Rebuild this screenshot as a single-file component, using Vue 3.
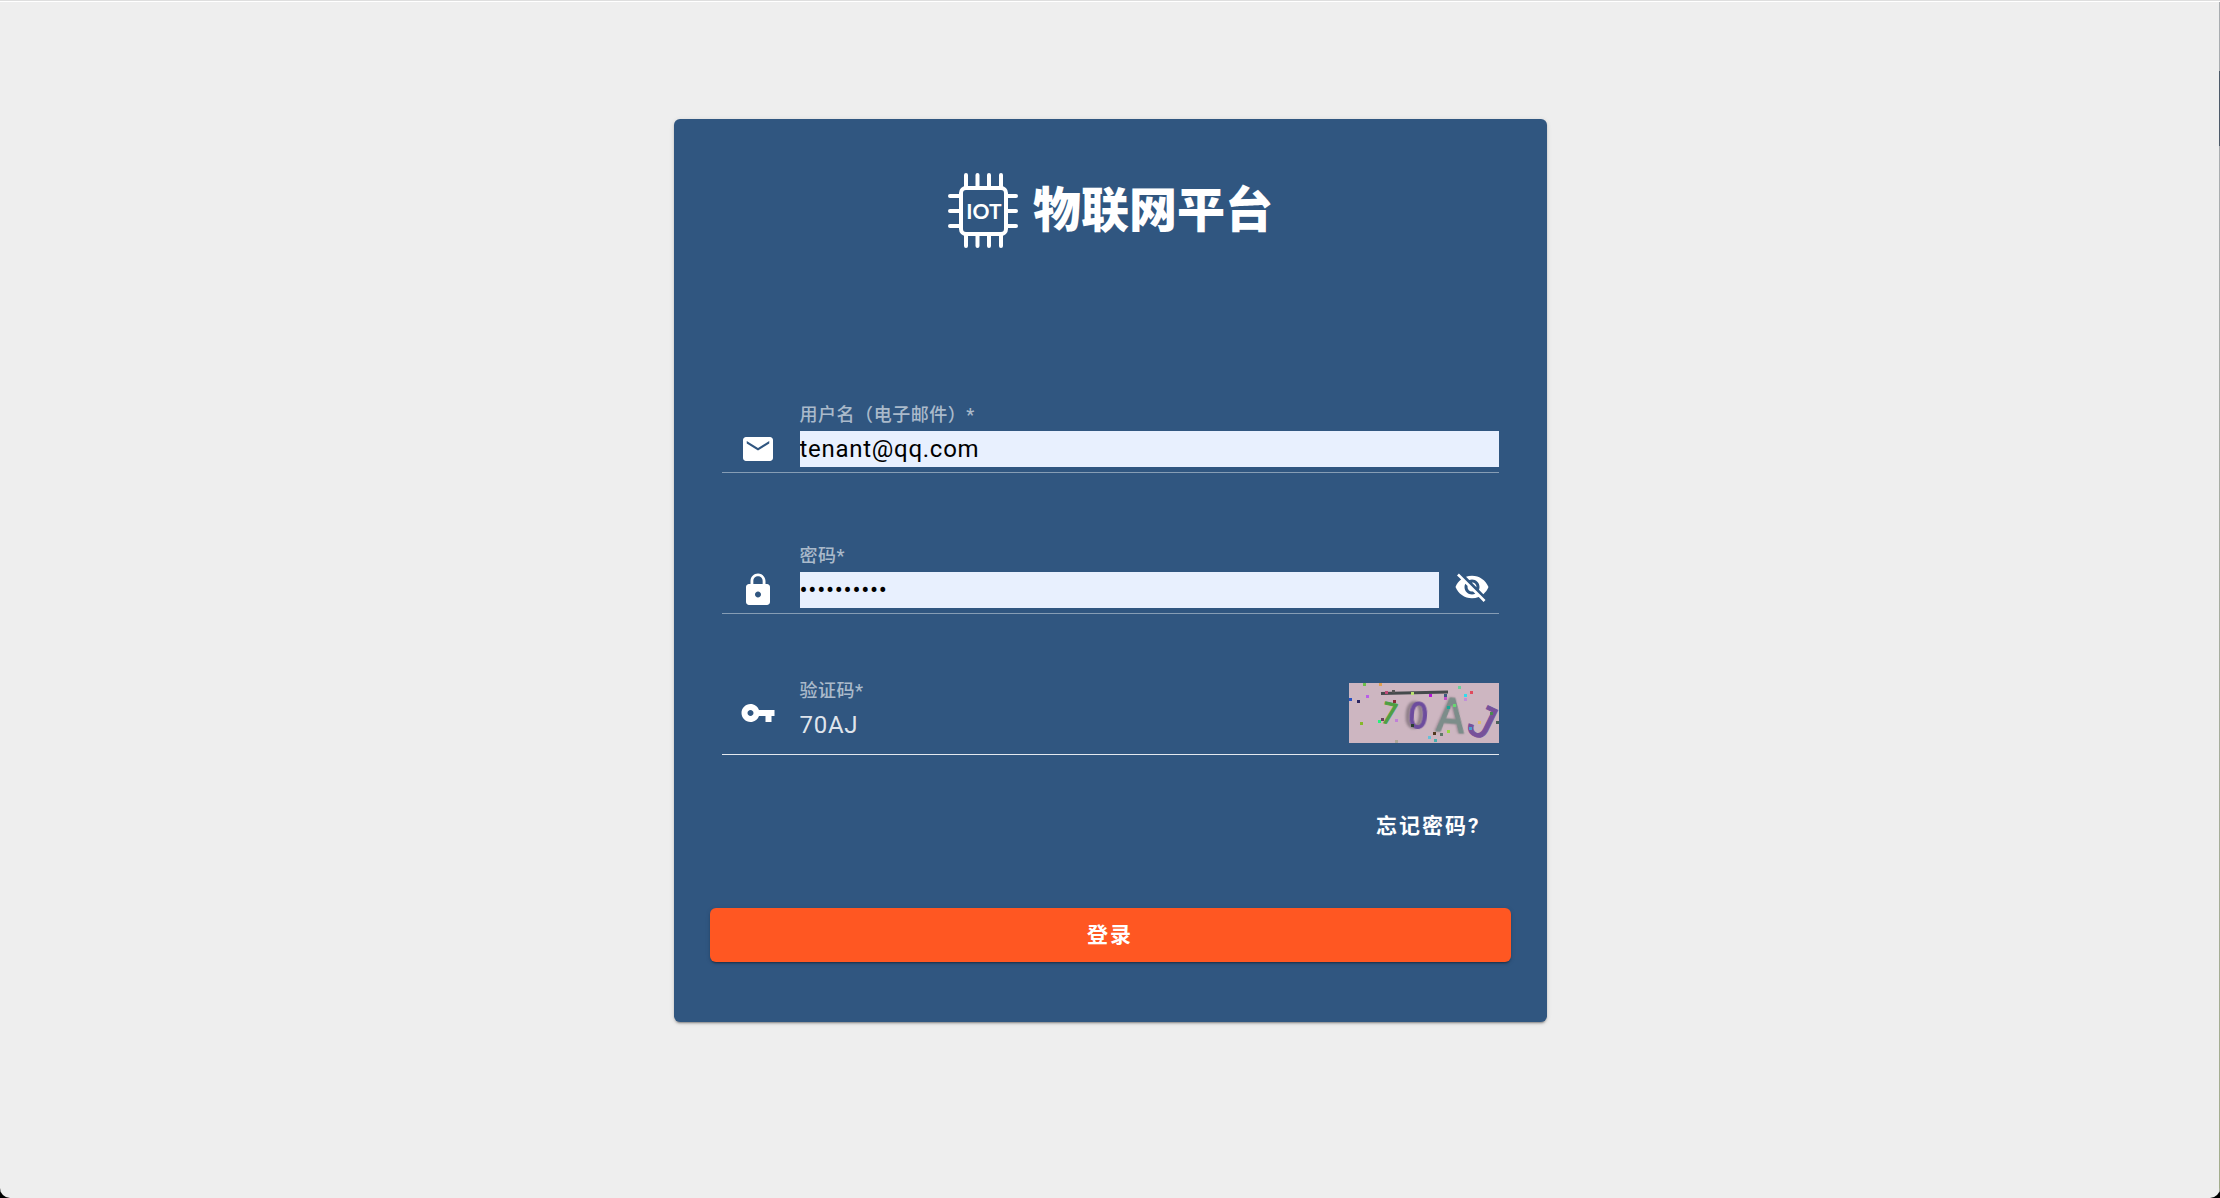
<script setup>
import { ref } from "vue";

const form = ref({
  username: "tenant@qq.com",
  password: "tenant2024",
  captcha: "70AJ",
});

const showPassword = ref(false);

// noise dots on the captcha: x, y, color
const dots = [
  [15, 1, "#6cc04a"],
  [31, 1, "#e0a050"],
  [0, 16, "#2a50c0"],
  [9, 18, "#2b2560"],
  [18, 13, "#b95ee8"],
  [37, 9, "#c04a78"],
  [44, 8, "#555555"],
  [63, 10, "#b8e070"],
  [81, 12, "#b414d8"],
  [96, 12, "#3d5a80"],
  [96, 15, "#c050c8"],
  [110, 4, "#6ccf9a"],
  [122, 9, "#e04a5c"],
  [116, 12, "#30dcec"],
  [116, 16, "#c090d8"],
  [45, 18, "#8c2c38"],
  [33, 36, "#6a4060"],
  [30, 38, "#28f07c"],
  [12, 40, "#86b82a"],
  [47, 37, "#c080d8"],
  [63, 42, "#2a4030"],
  [99, 24, "#1aa898"],
  [105, 22, "#66d870"],
  [142, 30, "#4a8a50"],
  [130, 39, "#e0c070"],
  [148, 39, "#4a6058"],
  [121, 45, "#4aa0d0"],
  [99, 48, "#98d840"],
  [92, 51, "#607868"],
  [85, 50, "#503820"],
  [80, 54, "#68c0d8"],
  [86, 57, "#48b0b0"],
  [47, 58, "#b0a898"],
];

function login() {
  console.log("login", form.value.username);
}
</script>

<template>
  <main class="page">
    <form class="card" @submit.prevent="login">
      <h1 class="logo">
        <svg class="chip" viewBox="0 0 72 77" fill="none" stroke="#fff" stroke-linecap="round">
          <rect x="14" y="16" width="45" height="46" rx="5" stroke-width="4" />
          <path
            stroke-width="4"
            d="M19 3v12M30.500 3v12M42 3v12M54 3v12M19 63v11M30.500 63v11M42 63v11M54 63v11M3 24h10M3 39h10M3 54h10M60 24h9M60 39h9M60 54h9"
          />
          <text x="37" y="47" text-anchor="middle" fill="#fff" stroke="none">IOT</text>
        </svg>
        <span>物联网平台</span>
      </h1>

      <div class="fields">
        <div class="field">
          <svg class="icon" viewBox="0 0 24 24">
            <path d="M20 4H4c-1.100 0-1.990.9-1.990 2L2 18c0 1.100.9 2 2 2h16c1.100 0 2-.9 2-2V6c0-1.100-.9-2-2-2zm-.5 4.300L12 13 4.500 8.300V6.700L12 11.400l7.500-4.700v1.600z" />
          </svg>
          <div class="control">
            <label for="username">用户名（电子邮件）*</label>
            <input id="username" v-model="form.username" class="filled" type="text" />
          </div>
        </div>

        <div class="field">
          <svg class="icon" viewBox="0 0 24 24">
            <path d="M18 8h-1V6c0-2.760-2.240-5-5-5S7 3.240 7 6v2H6c-1.100 0-2 .9-2 2v10c0 1.100.9 2 2 2h12c1.100 0 2-.9 2-2V10c0-1.100-.9-2-2-2zm-6 9c-1.100 0-2-.9-2-2s.9-2 2-2 2 .9 2 2-.9 2-2 2zm3.100-9H8.900V6c0-1.710 1.390-3.100 3.100-3.100 1.710 0 3.100 1.390 3.100 3.100v2z" />
          </svg>
          <div class="control">
            <label for="password">密码*</label>
            <input
              id="password"
              v-model="form.password"
              class="filled"
              :type="showPassword ? 'text' : 'password'"
            />
          </div>
          <button class="toggle" type="button" aria-label="显示密码" @click="showPassword = !showPassword">
            <svg viewBox="0 0 24 24">
              <path d="M12 7c2.760 0 5 2.240 5 5 0 .65-.13 1.260-.36 1.830l2.920 2.920c1.510-1.260 2.700-2.890 3.430-4.750-1.730-4.390-6-7.500-11-7.500-1.400 0-2.740.25-3.980.7l2.160 2.160C10.740 7.130 11.350 7 12 7zM2 4.270l2.280 2.280.46.46C3.080 8.300 1.780 10.020 1 12c1.730 4.390 6 7.500 11 7.500 1.550 0 3.030-.3 4.380-.84l.42.42L19.730 22 21 20.730 3.270 3 2 4.270zM7.530 9.800l1.550 1.550c-.05.21-.08.43-.08.65 0 1.660 1.340 3 3 3 .22 0 .44-.03.65-.08l1.550 1.550c-.67.33-1.410.53-2.200.53-2.760 0-5-2.240-5-5 0-.79.2-1.530.53-2.200zm4.310-.78l3.150 3.150.02-.16c0-1.660-1.340-3-3-3l-.17.01z" />
            </svg>
          </button>
        </div>

        <div class="field field-captcha">
          <svg class="icon" viewBox="0 0 24 24">
            <path d="M12.650 10C11.830 7.670 9.610 6 7 6c-3.310 0-6 2.690-6 6s2.690 6 6 6c2.610 0 4.830-1.670 5.650-4H17v4h4v-4h2v-4H12.650zM7 14c-1.100 0-2-.9-2-2s.9-2 2-2 2 .9 2 2-.9 2-2 2z" />
          </svg>
          <div class="control">
            <label for="captcha">验证码*</label>
            <input id="captcha" v-model="form.captcha" type="text" />
          </div>
          <svg class="captcha" viewBox="0 0 150 60">
            <rect width="150" height="60" fill="#cdb6c1" />
            <path d="M32 10.500L99 9" stroke="#454a4c" stroke-width="3" />
            <text class="seven" x="32" y="41" transform="rotate(12 40 31)">7</text>
            <text class="zero" x="59" y="45" transform="rotate(4 69 32)">0</text>
            <text class="letter-a" x="88" y="49" transform="rotate(5 101 32)">A</text>
            <text class="letter-j" x="122" y="55" transform="rotate(26 134 38)">J</text>
            <rect
              v-for="(dot, i) in dots"
              :key="i"
              :x="Math.max(dot[0] - 1, 0)"
              :y="dot[1] - 1"
              width="3"
              height="3"
              :fill="dot[2]"
            />
          </svg>
        </div>
      </div>

      <a class="forgot" href="#">忘记密码?</a>
      <button class="submit" type="submit">登录</button>
    </form>
  </main>
</template>

<style>
body {
  margin: 0;
  background: #000;
}
</style>

<style scoped>
* {
  box-sizing: border-box;
}

.page {
  min-height: 100vh;
  padding: 118px 24px 24px;
  background:
    linear-gradient(#a9adb0 70px, #4d5a68 70px, #4d5a68 145px, #a9adb0 145px, #a3ad8c) right top / 1px 100% no-repeat,
    #eee;
  border-top: 1px solid #dedede;
  box-shadow: inset 0 1px #fff;
  border-radius: 0 0 10px 10px;
  font-family: Roboto, "Noto Sans CJK SC", sans-serif;
}

.card {
  display: flex;
  flex-direction: column;
  max-width: 873px;
  margin: 0 auto;
  padding: 53px 36px 60px;
  background: #305680;
  color: #fff;
  border-radius: 6px;
  box-shadow:
    0 3px 1px -2px rgba(0, 0, 0, 0.2),
    0 2px 2px rgba(0, 0, 0, 0.14),
    0 1px 5px rgba(0, 0, 0, 0.12);
}

.logo {
  display: flex;
  align-items: center;
  justify-content: center;
  gap: 14px;
  height: 77px;
  margin: 0;
  font-size: 48px;
  line-height: 72px;
  font-weight: 900;
  white-space: nowrap;
}

.chip {
  width: 72px;
  height: 77px;
}

.chip text {
  font-family: Lato, sans-serif;
  font-size: 21px;
  font-weight: 700;
}

.fields {
  display: flex;
  flex-direction: column;
  gap: 57px;
  margin-top: 140px;
  padding: 0 12px;
}

.field {
  display: flex;
  align-items: flex-end;
  height: 84px;
  padding-bottom: 5px;
  border-bottom: 1px solid rgba(255, 255, 255, 0.42);
}

.icon {
  flex: none;
  width: 36px;
  height: 36px;
  margin: 0 24px 0 18px;
  fill: #fff;
}

.control {
  flex: 1;
  min-width: 0;
  display: flex;
  flex-direction: column;
  gap: 4px;
}

label {
  font-size: 18px;
  line-height: 24px;
  font-weight: 500;
  letter-spacing: 0.03em;
  color: rgba(255, 255, 255, 0.6);
}

input {
  width: 100%;
  height: 36px;
  padding: 0;
  border: none;
  outline: none;
  background: transparent;
  color: rgba(255, 255, 255, 0.87);
  font-family: inherit;
  font-size: 24px;
  letter-spacing: 0.03em;
}

.filled {
  background: #e8f0fe;
  color: #000;
}

.toggle {
  flex: none;
  width: 36px;
  height: 36px;
  margin: 0 9px 3px 15px;
  padding: 0;
  border: none;
  background: none;
  cursor: pointer;
}

.toggle svg {
  display: block;
  fill: #fff;
}

.field-captcha {
  align-items: center;
  padding-bottom: 0;
  background: rgba(255, 255, 255, 0.005);
  border-bottom-color: rgba(255, 255, 255, 0.87);
}

.field-captcha .control {
  padding-bottom: 4px;
}

.captcha {
  flex: none;
  width: 150px;
  height: 60px;
  overflow: visible;
}

.captcha text {
  font-family: "DejaVu Sans Condensed", "DejaVu Sans", sans-serif;
  stroke-width: 1px;
}

.captcha .seven {
  font-size: 29px;
  fill: #4f9f42;
  stroke: #4f9f42;
}

.captcha .zero {
  font-size: 36px;
  fill: #6d4c9e;
  stroke: #6d4c9e;
  filter: drop-shadow(-4px 0 1px rgba(80, 70, 80, 0.5));
}

.captcha .letter-a {
  font-size: 46px;
  fill: #7c8d8a;
  stroke: #7c8d8a;
  filter: drop-shadow(-1px 0 1px rgba(80, 70, 80, 0.4));
}

.captcha .letter-j {
  font-family: "Liberation Sans", sans-serif;
  font-size: 48px;
  fill: #77519a;
  stroke: #77519a;
}

.forgot,
.submit {
  font-size: 21px;
  line-height: 54px;
  font-weight: 700;
  letter-spacing: 2px;
  color: #fff;
}

.forgot {
  align-self: flex-end;
  margin-top: 44px;
  padding: 0 30px;
  text-decoration: none;
}

.submit {
  height: 54px;
  margin-top: 55px;
  padding: 0;
  border: none;
  border-radius: 6px;
  background: #ff5722;
  font-family: inherit;
  cursor: pointer;
  box-shadow:
    0 3px 1px -2px rgba(0, 0, 0, 0.2),
    0 2px 2px rgba(0, 0, 0, 0.14),
    0 1px 5px rgba(0, 0, 0, 0.12);
}
</style>
